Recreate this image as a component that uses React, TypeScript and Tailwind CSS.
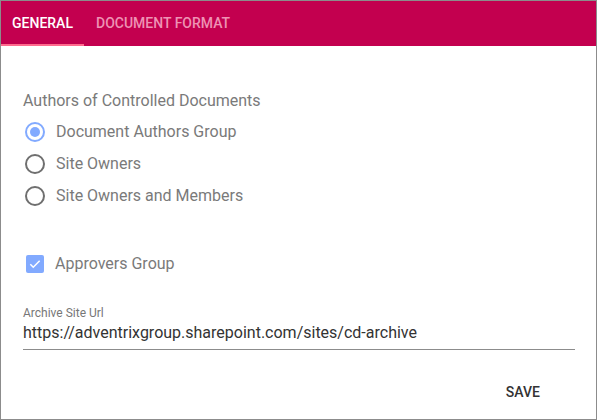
import React from "react";

function Radio({ checked, label }: { checked?: boolean; label: string }) {
  return (
    <div className="flex items-center h-[32px]">
      <div className="w-[20px] h-[20px] ml-[2px] flex items-center justify-center">
        {checked ? (
          <div className="w-[20px] h-[20px] rounded-full border-2 border-[#82aaff] flex items-center justify-center">
            <div className="w-[10px] h-[10px] rounded-full bg-[#82aaff]" />
          </div>
        ) : (
          <div className="w-[20px] h-[20px] rounded-full border-2 border-[#6f6f6f]" />
        )}
      </div>
      <span className="ml-[11px] text-[16px] text-[#7a7a7a]">{label}</span>
    </div>
  );
}

export default function App() {
  return (
    <div
      className="w-[597px] h-[420px] border border-[#8c8c8c] bg-white flex flex-col"
      style={{ fontFamily: "Roboto, 'Liberation Sans', sans-serif" }}
    >
      <div className="h-[45px] bg-[#c3004f] flex items-stretch shrink-0">
        <div className="w-[83px] flex items-center justify-center relative text-white text-[14px] font-medium">
          GENERAL
          <div className="absolute left-0 right-0 bottom-0 h-[2px] bg-[#ff6b8e]" />
        </div>
        <div className="px-[12px] flex items-center text-[14px] font-medium text-[#ee92b4]">
          DOCUMENT FORMAT
        </div>
      </div>
      <div className="flex-1 flex flex-col px-[22px]">
        <div className="mt-[45px] text-[16px] text-[#7a7a7a] leading-[20px]">
          Authors of Controlled Documents
        </div>
        <div className="mt-[5px] flex flex-col">
          <Radio checked label="Document Authors Group" />
          <Radio label="Site Owners" />
          <Radio label="Site Owners and Members" />
        </div>
        <div className="mt-[36px] flex items-center h-[32px]">
          <div className="ml-[3px] w-[18px] h-[18px] rounded-[2px] bg-[#82aaff] flex items-center justify-center">
            <svg width="14" height="14" viewBox="0 0 24 24" fill="none">
              <path d="M4 12.5l5 5L20 6.5" stroke="white" strokeWidth="2.6" />
            </svg>
          </div>
          <span className="ml-[11px] text-[16px] text-[#7a7a7a]">Approvers Group</span>
        </div>
        <div className="mt-[26px] text-[12px] text-[#777] leading-[14px]">Archive Site Url</div>
        <div className="mt-[3px] text-[16px] text-[#333] leading-[20px] pb-[6px] border-b border-[#8c8c8c] mr-[-1px]">
          https://adventrixgroup.sharepoint.com/sites/cd-archive
        </div>
        <div className="mt-[32px] flex justify-end pr-[34px]">
          <span className="text-[14px] font-medium text-[#333]">SAVE</span>
        </div>
      </div>
    </div>
  );
}
